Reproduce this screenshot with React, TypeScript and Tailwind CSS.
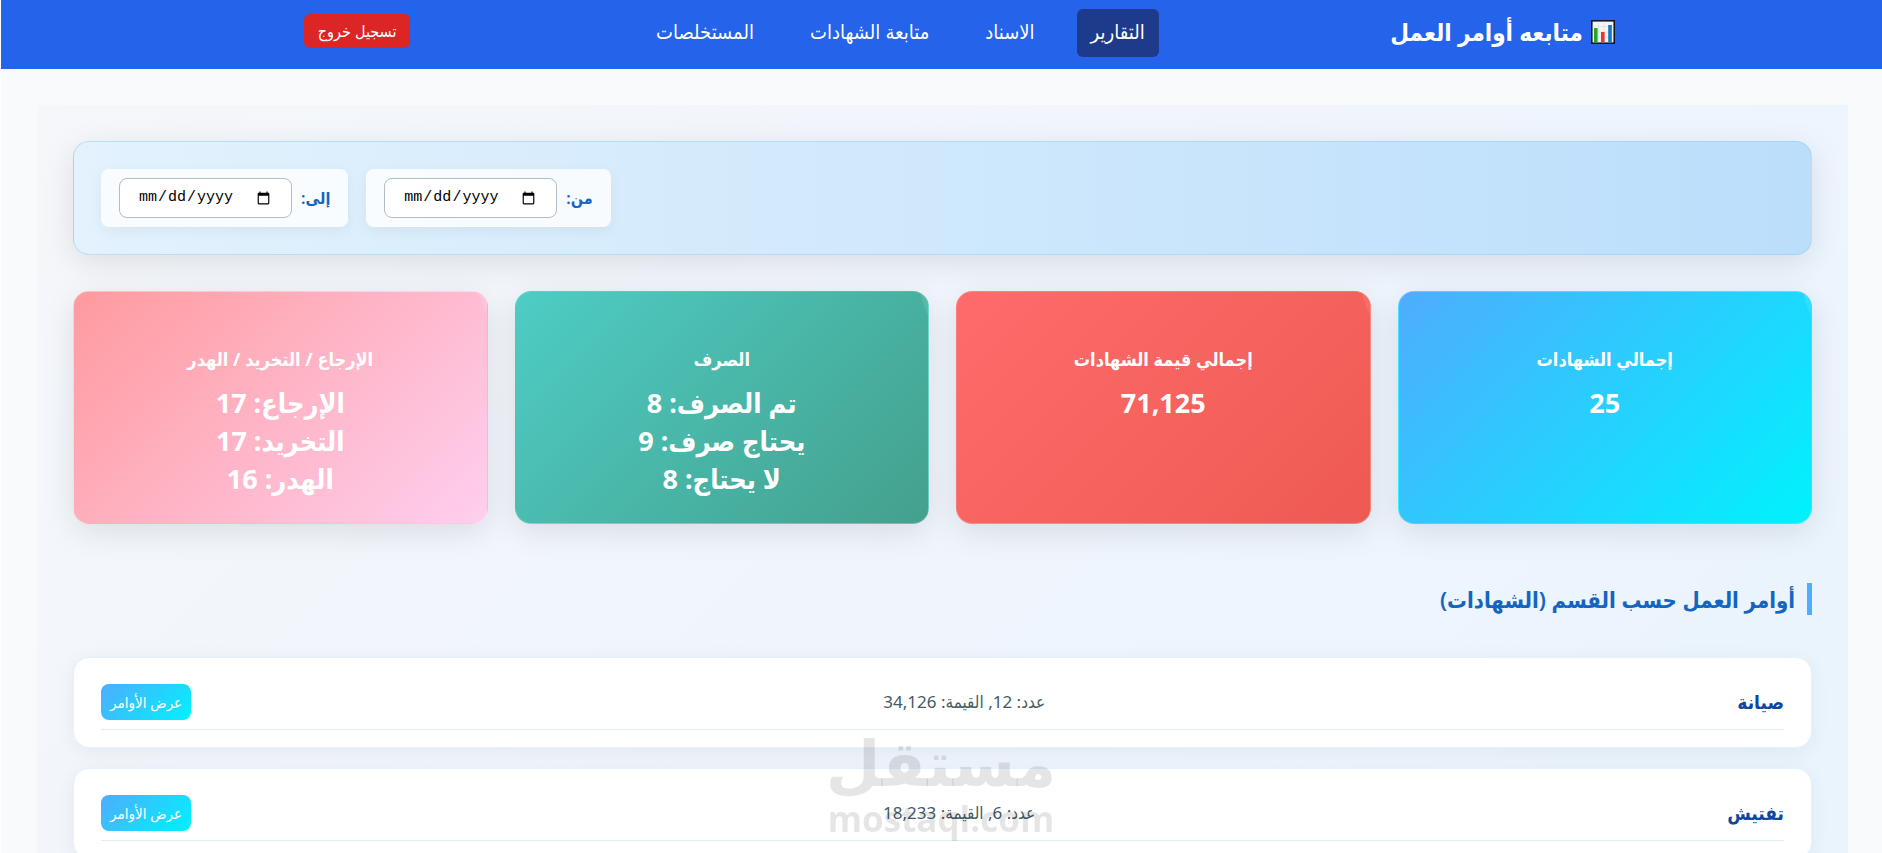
import { useState } from 'react';

const uiFont = "font-['Noto_Sans','DejaVu_Sans_Condensed','DejaVu_Sans',sans-serif]";

const links = [
  { label: 'التقارير', href: '#reports', active: true },
  { label: 'الاسناد', href: '#assign' },
  { label: 'متابعة الشهادات', href: '#certificates' },
  { label: 'المستخلصات', href: '#extracts' },
];

const stats = [
  {
    title: 'إجمالي الشهادات',
    lines: ['25'],
    gradient: 'from-[#4facfe] to-[#00f2fe]',
  },
  {
    title: 'إجمالي قيمة الشهادات',
    lines: ['71,125'],
    gradient: 'from-[#ff6b6b] to-[#ee5a52]',
  },
  {
    title: 'الصرف',
    lines: ['تم الصرف: 8', 'يحتاج صرف: 9', 'لا يحتاج: 8'],
    gradient: 'from-[#4ecdc4] to-[#44a08d]',
  },
  {
    title: 'الإرجاع / التخريد / الهدر',
    lines: ['الإرجاع: 17', 'التخريد: 17', 'الهدر: 16'],
    gradient: 'from-[#ff9a9e] to-[#fecfef]',
  },
];

const departments = [
  { name: 'صيانة', count: 12, total: '34,126' },
  { name: 'تفتيش', count: 6, total: '18,233' },
];

function ChartIcon() {
  return (
    <svg viewBox="0 0 24 24" className="size-6 shrink-0" aria-hidden="true">
      <rect x="0.8" y="0.8" width="22.4" height="22.4" fill="#f4f4f4" stroke="#111827" strokeWidth="1.6" />
      <path d="M1.6 6.5h20.8M1.6 12h20.8M1.6 17.5h20.8M7.5 1.6v20.8M13 1.6v20.8" stroke="#d6dbe2" strokeWidth="0.6" />
      <rect x="3" y="8" width="3.6" height="14.4" fill="#22a722" />
      <rect x="10" y="12" width="3.6" height="10.4" fill="#e23b2e" />
      <rect x="17.2" y="5" width="3.6" height="17.4" fill="#1976c5" />
    </svg>
  );
}

function Navbar() {
  return (
    <nav className="bg-[#2563eb] pt-[9px] pb-3 pl-[16.1%] pr-[14.2%] text-white">
      <div className="flex items-center justify-between">
        <a href="#home" className="flex h-12 items-center gap-2 pb-0.5 text-2xl font-bold whitespace-nowrap">
          <ChartIcon />
          متابعه أوامر العمل
        </a>

        <ul className="flex items-center gap-7">
          {links.map((link) => (
            <li key={link.href}>
              <a
                href={link.href}
                className={`flex h-12 items-center rounded-md px-3.5 pb-0.5 text-xl font-medium whitespace-nowrap ${
                  link.active ? 'bg-[#1e3a8a]' : ''
                }`}
              >
                {link.label}
              </a>
            </li>
          ))}
        </ul>

        <button
          type="button"
          className="mb-1 h-[34px] rounded-md bg-[#dc2626] px-3.5 text-base whitespace-nowrap"
        >
          تسجيل خروج
        </button>
      </div>
    </nav>
  );
}

function DateField({ id, label }: { id: string; label: string }) {
  const [value, setValue] = useState('');

  return (
    <div className="flex items-center gap-[9px] rounded-lg bg-white/80 px-[18px] py-[9px] shadow-[0_4px_14px_rgba(0,0,0,0.05)]">
      <label htmlFor={id} className="text-base font-semibold text-[#1565c0]">
        {label}
      </label>
      <input
        id={id}
        type="date"
        dir="ltr"
        value={value}
        onChange={(e) => setValue(e.target.value)}
        className="h-10 w-[173px] rounded-lg border border-[#b0bec5] bg-white px-[18px] font-['Liberation_Mono',monospace] text-[15px] text-black"
      />
    </div>
  );
}

function StatCard({ title, lines, gradient }: (typeof stats)[number]) {
  return (
    <div
      className={`relative overflow-hidden rounded-2xl border border-white/20 bg-linear-135/srgb px-6 pt-[51px] pb-[25px] text-center font-bold text-white shadow-[0_8px_32px_rgba(0,0,0,0.1)] ${gradient}`}
    >
      <span className="absolute -top-[97px] -right-[157px] size-[166px] rounded-full bg-white/10" />
      <h3 className="mb-[9px] text-lg leading-8">{title}</h3>
      {lines.map((line) => (
        <p key={line} className="text-[27px] leading-[38px]">
          {line}
        </p>
      ))}
    </div>
  );
}

function DepartmentRow({ name, count, total }: (typeof departments)[number]) {
  return (
    <article className="rounded-2xl border border-[#e3f2fd] bg-white px-[27px] pt-[26px] pb-[17px] shadow-[0_4px_20px_rgba(0,0,0,0.06)]">
      <div className="flex items-center justify-between border-b border-[#e3ecf1] pb-[9px]">
        <h3 className="text-[19px] font-bold text-[#0d47a1]">{name}</h3>
        <p className="text-[17px] text-[#455a64]">
          عدد: {count}, القيمة: {total}
        </p>
        <button
          type="button"
          className="h-9 rounded-lg bg-linear-135/srgb from-[#4facfe] to-[#00f2fe] px-[9px] text-[15px] text-white"
        >
          عرض الأوامر
        </button>
      </div>
    </article>
  );
}

function Watermark() {
  return (
    <div className="pointer-events-none fixed bottom-3 left-1/2 -translate-x-1/2 text-center font-['Open_Sans','DejaVu_Sans',sans-serif] font-bold text-black/10">
      <p className="text-[63px] leading-[70px]">مستقل</p>
      <p className="text-[35px] leading-11" dir="ltr">
        mostaql.com
      </p>
    </div>
  );
}

export default function App() {
  return (
    <div dir="rtl" className={`min-h-screen border-l border-white bg-[#f9fafb] ${uiFont}`}>
      <Navbar />

      <main className="mt-9 mr-[34px] ml-9 bg-linear-135/srgb from-[#f5f7fa] via-[#f0f5fd] to-[#e9f4fd] p-9">
        {/* فلتر التاريخ */}
        <section className="mb-9 flex justify-end gap-[18px] rounded-2xl border border-[#90caf9]/50 bg-linear-90/srgb from-[#e3f2fd] to-[#bbdefb] p-[27px] shadow-[0_8px_32px_rgba(0,0,0,0.1)]">
          <DateField id="from" label="من:" />
          <DateField id="to" label="إلى:" />
        </section>

        {/* بطاقات الإحصائيات */}
        <section className="mb-[59px] grid grid-cols-4 gap-[27px]">
          {stats.map((stat) => (
            <StatCard key={stat.title} {...stat} />
          ))}
        </section>

        <h2 className="mb-[42px] border-r-[5px] border-[#4facfe] pr-3 text-[22px] leading-8 font-semibold text-[#1565c0]">
          أوامر العمل حسب القسم (الشهادات)
        </h2>

        {/* الأقسام */}
        <section className="flex flex-col gap-5">
          {departments.map((dep) => (
            <DepartmentRow key={dep.name} {...dep} />
          ))}
        </section>
      </main>

      <Watermark />
    </div>
  );
}
